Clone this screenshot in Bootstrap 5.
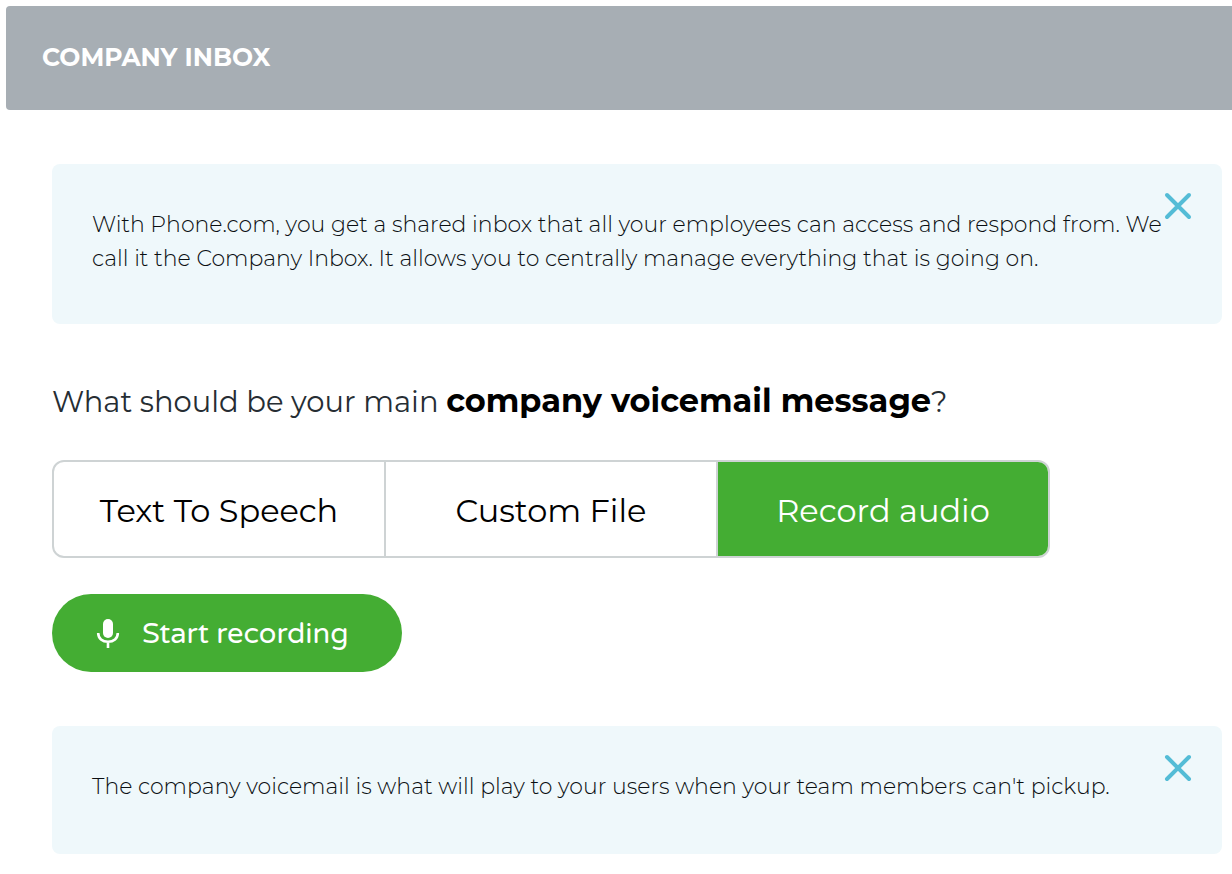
<!DOCTYPE html>
<html lang="en">
<head>
<meta charset="utf-8">
<meta name="viewport" content="width=device-width, initial-scale=1">
<title>Company Inbox</title>
<link href="https://cdn.jsdelivr.net/npm/bootstrap@5.3.0/dist/css/bootstrap.min.css" rel="stylesheet">
<style>
  body { font-family: Montserrat, Inter, "Open Sans", sans-serif; color: #262d33; background: #fff; }
  .page-bar { background: #a7aeb4; color: #fff; min-height: 104px; margin: 6px 0 54px 6px; padding: 0 36px 2px; border-radius: 4px 0 0 4px; }
  .page-bar h1 { font-size: 25px; line-height: 32px; font-weight: 700; }
  .page-body { padding: 0 10px 20px 52px; }
  .note { background: #eff8fb; border-radius: 8px; padding: 44px 40px 48px; font-size: 22px; line-height: 34px; font-weight: 300; color: #0b0f12; }
  .note-short { padding-bottom: 50px; }
  .note-close { top: 28px; right: 30px; color: #54bcd6; line-height: 0; }
  .question { font-size: 29px; line-height: 40px; font-weight: 400; margin: 57px 0 38px; }
  .question strong { font-size: 32px; font-weight: 700; color: #000; }
  .choices { max-width: 998px; border: 2px solid #ced3d4; border-radius: 12px; overflow: hidden; }
  .choices .btn { flex: 1 1 0; border: 0; border-radius: 0; padding: 25px 8px 21px; font-size: 32px; line-height: 48px; font-weight: 400; color: #000; }
  .choices .btn + .btn-check + .btn { border-left: 2px solid #ced3d4; }
  .choices .btn-check:checked + .btn { background: #44ad33; color: #fff; border-color: #ced3d4; }
  .record { background: #44ad33; color: #fff; min-height: 78px; padding: 2px 53px 0 44px; gap: 22px; margin: 36px 0 54px; font-family: "Varela Round", Varela, Montserrat, Inter, sans-serif; font-size: 29px; line-height: 36px; font-weight: 600; }
  .record:hover { background: #3b9a2c; color: #fff; }
</style>
</head>
<body>
<header class="page-bar d-flex align-items-center">
  <h1 class="m-0 text-uppercase">Company Inbox</h1>
</header>
<main class="page-body">
  <section class="note position-relative">
    <p class="m-0">With Phone.com, you get a shared inbox that all your employees can access and respond from. We call it the Company Inbox. It allows you to centrally manage everything that is going on.</p>
    <button type="button" class="note-close btn border-0 p-0 position-absolute" aria-label="Close">
      <svg width="28" height="28" viewBox="0 0 28 28" fill="none" stroke="currentColor" stroke-width="4" stroke-linecap="round"><path d="M3 3 25 25M25 3 3 25"/></svg>
    </button>
  </section>

  <h2 class="question">What should be your main <strong>company voicemail message</strong>?</h2>

  <div class="choices d-flex" role="group" aria-label="Voicemail message type">
    <input type="radio" class="btn-check" name="message" id="message-tts">
    <label class="btn" for="message-tts">Text To Speech</label>
    <input type="radio" class="btn-check" name="message" id="message-file">
    <label class="btn" for="message-file">Custom File</label>
    <input type="radio" class="btn-check" name="message" id="message-record" checked>
    <label class="btn" for="message-record">Record audio</label>
  </div>

  <button type="button" class="record btn border-0 rounded-pill d-inline-flex align-items-center">
    <svg width="24" height="30" viewBox="0 0 24 30" aria-hidden="true"><rect x="7" y="0" width="10" height="19" rx="5" fill="#fff"/><path d="M2.200 14C2.200 19.500 6.400 22.800 12 22.800S21.800 19.500 21.800 14M12 22.500V29" fill="none" stroke="#fff" stroke-width="2.600"/></svg>
    Start recording
  </button>

  <section class="note note-short position-relative">
    <p class="m-0">The company voicemail is what will play to your users when your team members can't pickup.</p>
    <button type="button" class="note-close btn border-0 p-0 position-absolute" aria-label="Close">
      <svg width="28" height="28" viewBox="0 0 28 28" fill="none" stroke="currentColor" stroke-width="4" stroke-linecap="round"><path d="M3 3 25 25M25 3 3 25"/></svg>
    </button>
  </section>
</main>
<script src="https://cdn.jsdelivr.net/npm/bootstrap@5.3.0/dist/js/bootstrap.bundle.min.js"></script>
</body>
</html>
